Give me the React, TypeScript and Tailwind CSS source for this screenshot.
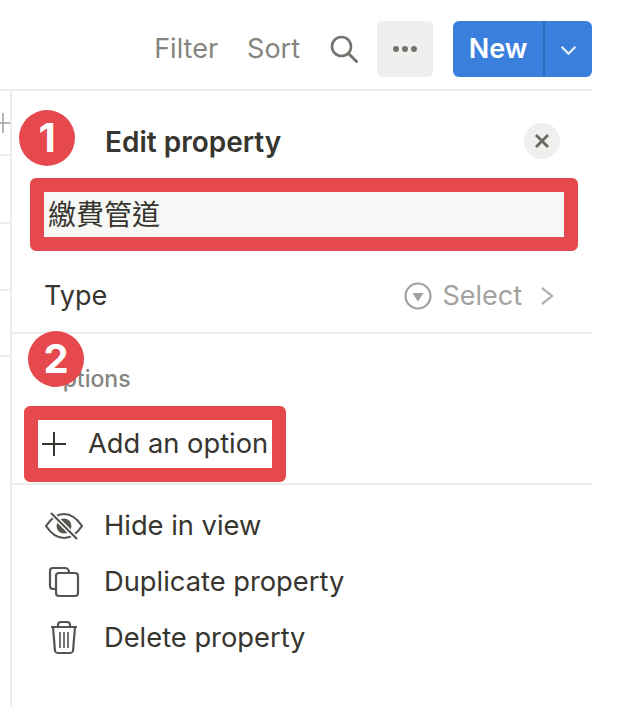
import React from 'react';

const font = { fontFamily: '"Inter", "Noto Sans CJK TC", sans-serif' };

const RowIcon = ({ children }: { children: React.ReactNode }) => (
    <svg viewBox="0 0 40 40" className="w-[40px] h-[40px] shrink-0" fill="none" stroke="#555550" strokeWidth="2.2">
        {children}
    </svg>
);

const ActionRow = ({ icon, label }: { icon: React.ReactNode; label: string }) => (
    <div className="flex items-center h-[56px] pl-[32px] gap-[20px] text-[27.3px] text-[#37352f]">
        {icon}
        <span>{label}</span>
    </div>
);

const Badge = ({ n, className }: { n: string; className: string }) => (
    <div className={`absolute w-[56px] h-[56px] rounded-full bg-[#e5484d] flex items-center justify-center text-white text-[40px] font-bold ${className}`}>
        {n}
    </div>
);

export default function App() {
    return (
        <div className="relative w-[632px] h-[706px] bg-white overflow-hidden" style={font}>
            <div className="w-[592px] h-[91px] border-b-2 border-[#ededec] flex items-center justify-end pt-[9px]">
                <span className="text-[27px] text-[#85847f]">Filter</span>
                <span className="text-[27px] text-[#85847f] ml-[29px]">Sort</span>
                <svg viewBox="0 0 28 28" className="w-[28px] h-[28px] ml-[30px]" fill="none" stroke="#73726d" strokeWidth="2.6">
                    <circle cx="11.5" cy="11.5" r="9.5" />
                    <path d="M18.5 18.5 L26.5 26.5" strokeLinecap="round" strokeWidth="3" />
                </svg>
                <div className="w-[56px] h-[56px] ml-[19px] rounded-[5px] bg-[#efefee] flex items-center justify-center gap-[3px]">
                    <span className="w-[6px] h-[6px] rounded-full bg-[#73726d]" />
                    <span className="w-[6px] h-[6px] rounded-full bg-[#73726d]" />
                    <span className="w-[6px] h-[6px] rounded-full bg-[#73726d]" />
                </div>
                <div className="w-[139px] h-[56px] ml-[20px] rounded-[6px] bg-[#3a7fdc] flex text-white">
                    <div className="w-[92px] border-r-2 border-[#3068b8] flex items-center justify-center text-[27px] font-semibold">New</div>
                    <div className="flex-1 flex items-center justify-center">
                        <svg viewBox="0 0 18 12" className="w-[17px] h-[11px] mt-[2px]" fill="none" stroke="#e8f0fb" strokeWidth="2.4">
                            <path d="M1.5 2 L9 9.5 L16.5 2" />
                        </svg>
                    </div>
                </div>
            </div>

            <div className="flex h-[615px] w-[592px]">
                <div className="w-[12px] border-r-2 border-[#ededec] shrink-0">
                    <div className="h-[65px] border-b-2 border-[#ededec] flex items-start">
                        <svg viewBox="0 0 10 20" className="w-[10px] h-[20px] mt-[22px]" fill="none" stroke="#a5a4a0" strokeWidth="1.6">
                            <path d="M3 0 V20 M0 10 H10" />
                        </svg>
                    </div>
                    <div className="h-[68px] border-b-2 border-[#ededec]" />
                    <div className="h-[67px] border-b-2 border-[#ededec]" />
                    <div className="h-[66px] border-b-2 border-[#ededec]" />
                </div>

                <div className="flex-1">
                    <div className="flex items-center justify-between h-[36px] mt-[32px] pl-[93px] pr-[32px]">
                        <span className="text-[28px] font-semibold text-[#37352f] pt-[1px]">Edit property</span>
                        <div className="w-[36px] h-[36px] rounded-full bg-[#efefee] flex items-center justify-center">
                            <svg viewBox="0 0 16 16" className="w-[16px] h-[16px]" fill="none" stroke="#686762" strokeWidth="2.8">
                                <path d="M2 2 L14 14 M14 2 L2 14" />
                            </svg>
                        </div>
                    </div>

                    <div className="ml-[18px] w-[548px] h-[73px] mt-[19px] border-[14px] border-[#e5484d] rounded-[6px] bg-[#f7f7f5] flex items-center pl-[4px] text-[28px] text-[#37352f]">
                        繳費管道
                    </div>

                    <div className="flex items-center h-[83px] pl-[32px] pr-[38px] pt-[9px] border-b-2 border-[#ededec] text-[27px]">
                        <span className="text-[#37352f]">Type</span>
                        <svg viewBox="0 0 28 28" className="w-[28px] h-[28px] ml-auto" fill="none" stroke="#a3a29e" strokeWidth="2.2">
                            <circle cx="14" cy="14" r="12.5" />
                            <path d="M8.5 11 H19.5 L14 19.5 Z" fill="#a3a29e" stroke="none" />
                        </svg>
                        <span className="ml-[10px] text-[#a3a29e]">Select</span>
                        <svg viewBox="0 0 14 20" className="w-[14px] h-[20px] ml-[18px]" fill="none" stroke="#b5b4b0" strokeWidth="2.4">
                            <path d="M2 2 L12 10 L2 18" />
                        </svg>
                    </div>

                    <div className="h-[72px] pl-[33px] pt-[31px] text-[23px] font-medium leading-[28px] text-[#85847f]">Options</div>

                    <div className="ml-[12px] w-[262px] h-[76px] border-[14px] border-[#e5484d] rounded-[6px] bg-white flex items-center text-[27.3px] text-[#37352f]">
                        <svg viewBox="0 0 24 24" className="w-[24px] h-[24px] ml-[4px]" fill="none" stroke="#37352f" strokeWidth="2">
                            <path d="M12 0 V24 M0 12 H24" />
                        </svg>
                        <span className="ml-[22px]">Add an option</span>
                    </div>

                    <div className="border-t-2 border-[#ededec] mt-[1px] pt-[13px]">
                        <ActionRow
                            label="Hide in view"
                            icon={
                                <RowIcon>
                                    <path d="M2 20 C8 11 14 8 20 8 C26 8 32 11 38 20 C32 29 26 32 20 32 C14 32 8 29 2 20 Z" />
                                    <circle cx="20" cy="20" r="7.5" fill="#555550" stroke="none" />
                                    <path d="M7 7 L33 33" stroke="#ffffff" strokeWidth="5" />
                                    <path d="M7 7 L33 33" />
                                </RowIcon>
                            }
                        />
                        <ActionRow
                            label="Duplicate property"
                            icon={
                                <RowIcon>
                                    <path d="M11 27 H9 A3 3 0 0 1 6 24 V9 A3 3 0 0 1 9 6 H21 A4 4 0 0 1 25 10" />
                                    <rect x="12" y="11" width="22" height="23" rx="3" />
                                </RowIcon>
                            }
                        />
                        <ActionRow
                            label="Delete property"
                            icon={
                                <RowIcon>
                                    <path d="M7 9 H33 M14 8 V6.5 A3 3 0 0 1 17 4 H23 A3 3 0 0 1 26 6.5 V8" />
                                    <path d="M9 9 L11 33 A3 3 0 0 0 14 35 H26 A3 3 0 0 0 29 33 L31 9" />
                                    <path d="M16 14 V30 M20 14 V30 M24 14 V30" strokeWidth="1.6" />
                                </RowIcon>
                            }
                        />
                    </div>
                </div>
            </div>

            <Badge n="1" className="left-[19px] top-[110px]" />
            <Badge n="2" className="left-[28px] top-[331px]" />
        </div>
    );
}
